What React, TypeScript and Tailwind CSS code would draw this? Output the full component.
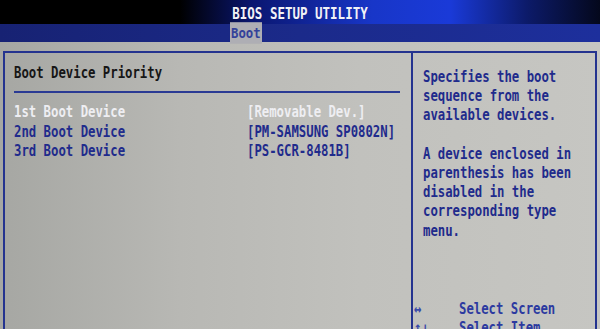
import React from "react";

const Line = ({ children, className = "" }: { children?: React.ReactNode; className?: string }) => (
  <div className={`h-[19.25px] leading-[19.25px] whitespace-pre scale-y-[1.3] origin-center ${className}`}>{children}</div>
);

export default function App() {
  return (
    <div className="w-[600px] h-[329px] overflow-hidden bg-black flex flex-col font-['DejaVu_Sans_Mono',monospace] font-bold text-[12.3px]">
      {/* Title bar */}
      <div className="h-[25px] pt-[4px] bg-[linear-gradient(90deg,#000_30%,#0a1670_42%,#1836c8_62%,#1a3ad8_75%,#0c1a68_88%,#04081c)] flex justify-center">
        <div className="text-[#f2f2f6] text-[12.5px] leading-[20px] scale-y-[1.3]">BIOS SETUP UTILITY</div>
      </div>
      {/* Menu bar */}
      <div className="h-[18px] bg-[linear-gradient(90deg,#172273,#1b2a8a_50%,#1d2f9c)] flex">
        <div className="ml-[230px] w-[32px] bg-[#aeaeb4] text-[#34429a] leading-[19px] pl-[1px] scale-y-[1.2]">Boot</div>
      </div>
      {/* Body */}
      <div className="flex-1 bg-[linear-gradient(90deg,#a6a7a3,#b8b8b4_30%,#c1c1bd_60%,#c6c6c2)] pt-[9px] pl-[3px]">
        <div className="w-[594px] h-[300px] border-2 border-[#24338f] flex">
          {/* Left panel */}
          <div className="w-[406px] pl-[9px] pr-[11px] pt-[11px]">
            <Line className="text-[#161616]">Boot Device Priority</Line>
            <div className="mt-[8px] h-[2px] bg-[#2a3a94]" />
            <div className="mt-[10px]">
              <div className="flex">
                <Line className="w-[233px] text-[#eeeef2]">1st Boot Device</Line>
                <Line className="text-[#eeeef2]">[Removable Dev.]</Line>
              </div>
              <div className="flex">
                <Line className="w-[233px] text-[#1f2b8c]">2nd Boot Device</Line>
                <Line className="text-[#1f2b8c]">[PM-SAMSUNG SP0802N]</Line>
              </div>
              <div className="flex">
                <Line className="w-[233px] text-[#1f2b8c]">3rd Boot Device</Line>
                <Line className="text-[#1f2b8c]">[PS-GCR-8481B]</Line>
              </div>
            </div>
          </div>
          {/* Right panel */}
          <div className="flex-1 border-l-2 border-[#24338f] text-[#1f2b8c]">
            <div className="pl-[10px] pt-[14.5px]">
              <Line>Specifies the boot</Line>
              <Line>sequence from the</Line>
              <Line>available devices.</Line>
              <Line> </Line>
              <Line>A device enclosed in</Line>
              <Line>parenthesis has been</Line>
              <Line>disabled in the</Line>
              <Line>corresponding type</Line>
              <Line>menu.</Line>
            </div>
            <div className="mt-[59px] pl-[1px]">
              <div className="flex">
                <Line className="w-[45px] text-[#3a4aa8]">↔</Line>
                <Line className="text-[#2c3aa0]">Select Screen</Line>
              </div>
              <div className="flex">
                <Line className="w-[45px] text-[#3a4aa8]">↑↓</Line>
                <Line className="text-[#2c3aa0]">Select Item</Line>
              </div>
            </div>
          </div>
        </div>
      </div>
    </div>
  );
}
